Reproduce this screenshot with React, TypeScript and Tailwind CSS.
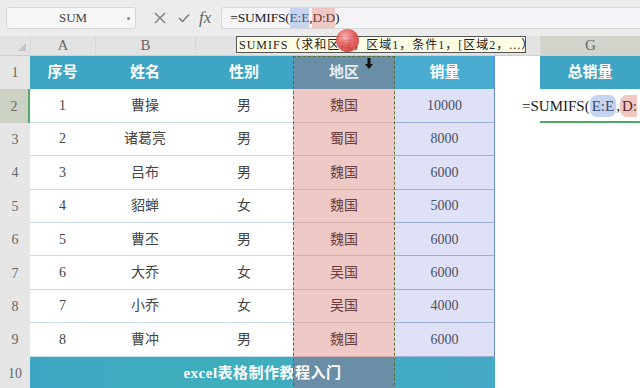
import React from "react";

const rows = [
  ["1", "曹操", "男", "魏国", "10000"],
  ["2", "诸葛亮", "男", "蜀国", "8000"],
  ["3", "吕布", "男", "魏国", "6000"],
  ["4", "貂蝉", "女", "魏国", "5000"],
  ["5", "曹丕", "男", "魏国", "6000"],
  ["6", "大乔", "女", "吴国", "6000"],
  ["7", "小乔", "女", "吴国", "4000"],
  ["8", "曹冲", "男", "魏国", "6000"],
];

const serif = "font-['Liberation_Serif','Noto_Sans_CJK_SC',serif]";

export default function App() {
  return (
    <div className={`w-[640px] h-[388px] overflow-hidden relative bg-white ${serif}`}>
      {/* toolbar */}
      <div className="h-[36px] bg-[#ececec] flex items-center pl-[6px] pr-0">
        <div className="w-[130px] h-[22px] bg-[#f6f6f6] border border-[#d6d6d6] rounded-[3px] flex items-center relative">
          <span className="flex-1 text-center text-[13px] text-[#444] pl-[4px]">SUM</span>
          <span className="absolute right-[5px] top-[9px] w-[3px] h-[3px] bg-[#888] rounded-full" />
        </div>
        <div className="flex items-center gap-[10px] ml-[17px] text-[#666]">
          <svg width="14" height="14" viewBox="0 0 14 14"><path d="M2 2 L12 12 M12 2 L2 12" stroke="#777" strokeWidth="1.3" /></svg>
          <svg width="14" height="14" viewBox="0 0 14 14"><path d="M2 7 L5.5 10.5 L12 3.5" stroke="#777" strokeWidth="1.3" fill="none" /></svg>
          <span className="italic text-[17px] text-[#666] font-['Liberation_Serif',serif] -ml-[2px]">fx</span>
        </div>
        <div className="ml-[10px] flex-1 h-[22px] bg-[#f4f4f6] border-l border-y border-[#d8d8d8] rounded-l-[3px] flex items-center pl-[8px] text-[13.5px] text-[#222] tracking-[-0.2px]">
          <span>=SUMIFS(</span>
          <span className="bg-[#c6d4ef] text-[#4a5a80]">E:E</span>
          <span>,</span>
          <span className="bg-[#efc8c4] text-[#6a3a36]">D:D</span>
          <span>)</span>
        </div>
      </div>

      {/* grid */}
      <div className="grid grid-cols-[30px_65px_100px_98px_102px_100px_45px_100px] grid-rows-[20px_repeat(10,33.4px)]">
        {/* column letters */}
        <div className="bg-[#e3e3e3] border-b border-[#d0d0d0] relative">
          <span className="absolute right-[4px] bottom-[4px] w-0 h-0 border-l-[8px] border-l-transparent border-b-[8px] border-b-[#c4c4c4]" />
        </div>
        {["A", "B", "C", "D", "E", "F", "G"].map((c) => (
          <div
            key={c}
            className={`flex items-center justify-center text-[15px] text-[#666] border-b border-[#d0d0d0] border-l border-l-[#d8d8d8] ${
              c === "G" ? "bg-[#d2d4cc]" : "bg-[#e3e3e3]"
            }`}
          >
            {c}
          </div>
        ))}

        {/* header row */}
        <div className="bg-[#e6e6e6] flex items-center justify-center text-[14px] text-[#666]">1</div>
        {["序号", "姓名", "性别"].map((t) => (
          <div key={t} className="bg-[#3ea6c4] flex items-center justify-center text-[15px] font-bold text-white">{t}</div>
        ))}
        <div className="bg-[#6a8ea6] flex items-center justify-center text-[15px] font-bold text-[#e8eef2]">地区</div>
        <div className="bg-[#49acd0] border-r border-[#5a86d8] flex items-center justify-center text-[15px] font-bold text-white">销量</div>
        <div className="bg-white" />
        <div className="bg-[#3ea6c4] flex items-center justify-center text-[15px] font-bold text-white">总销量</div>

        {/* data rows */}
        {rows.map((r, i) => (
          <React.Fragment key={i}>
            <div
              className={`flex items-center justify-center text-[14px] text-[#666] ${
                i === 0 ? "bg-[#cdd3c4] border-r-2 border-[#5aa870]" : "bg-[#e6e6e6]"
              }`}
            >
              {i + 2}
            </div>
            <div className="bg-white border-b border-[#c6dcea] flex items-center justify-center text-[14px] text-[#444]">{r[0]}</div>
            <div className="bg-white border-b border-[#c6dcea] flex items-center justify-center text-[14px] text-[#444]">{r[1]}</div>
            <div className="bg-white border-b border-[#c6dcea] flex items-center justify-center text-[14px] text-[#444]">{r[2]}</div>
            <div className="bg-[#efc9c6] border-b border-[#d7aeae] flex items-center justify-center text-[14px] text-[#6a3e40]">{r[3]}</div>
            <div className="bg-[#dfe1f7] border-b border-[#9eaed8] border-r border-r-[#6a8ad8] flex items-center justify-center text-[14px] text-[#4a5064]">{r[4]}</div>
            {i === 0 ? (
              <div className="col-span-2 bg-white relative flex items-center pl-[27px] overflow-hidden whitespace-nowrap text-[15px] text-[#222]">
                <span>=SUMIFS(</span>
                <span className="bg-[#c6d4ef] rounded-[7px] px-[2px] text-[#3a4a70]">E:E</span>
                <span>,</span>
                <span className="bg-[#efc8c4] rounded-l-[7px] pl-[2px] text-[#5a2a28]">D:</span>
                <span className="absolute left-[45px] right-0 bottom-0 h-[2px] bg-[#4aa868]" />
              </div>
            ) : (
              <>
                <div className="bg-white" />
                <div className="bg-white" />
              </>
            )}
          </React.Fragment>
        ))}

        {/* footer row */}
        <div className="bg-[#e6e6e6] flex items-center justify-center text-[14px] text-[#666]">10</div>
        <div className="col-span-5 relative bg-[linear-gradient(90deg,#3ea6c4_0%,#3faebb_40%,#44a9c6_100%)] flex items-center justify-center">
          <div className="absolute left-[263px] top-0 bottom-0 w-[102px] bg-[#6a8ea6]" />
          <span className="relative text-[15px] font-bold text-white tracking-[0.5px]">excel表格制作教程入门</span>
        </div>
        <div className="bg-white" />
        <div className="bg-white" />
      </div>

      {/* marching ants around column D */}
      <div className="absolute left-[293px] top-[56px] w-[102px] h-[340px] border-[1.5px] border-dashed border-[#56703c] pointer-events-none" />

      {/* tooltip */}
      <div className="absolute left-[236px] top-[36px] h-[17px] w-[290px] bg-[#fdfde6] border border-[#555] flex items-center pl-[2px] text-[12px] text-[#222] whitespace-nowrap tracking-[1px]">
        SUMIFS（求和区域，区域1，条件1，[区域2，...）
      </div>

      {/* click indicator */}
      <div className="absolute left-[336px] top-[29px] w-[23px] h-[23px] rounded-full bg-[radial-gradient(circle_at_40%_35%,#f7b0b0_0%,#e25252_45%,#c83434_100%)] opacity-90" />

      {/* cursor */}
      <svg className="absolute left-[365px] top-[58px]" width="8" height="12" viewBox="0 0 8 12">
        <rect x="2.5" y="0" width="3" height="6" fill="#111" />
        <path d="M0 6 L8 6 L4 11 Z" fill="#111" />
      </svg>
    </div>
  );
}
